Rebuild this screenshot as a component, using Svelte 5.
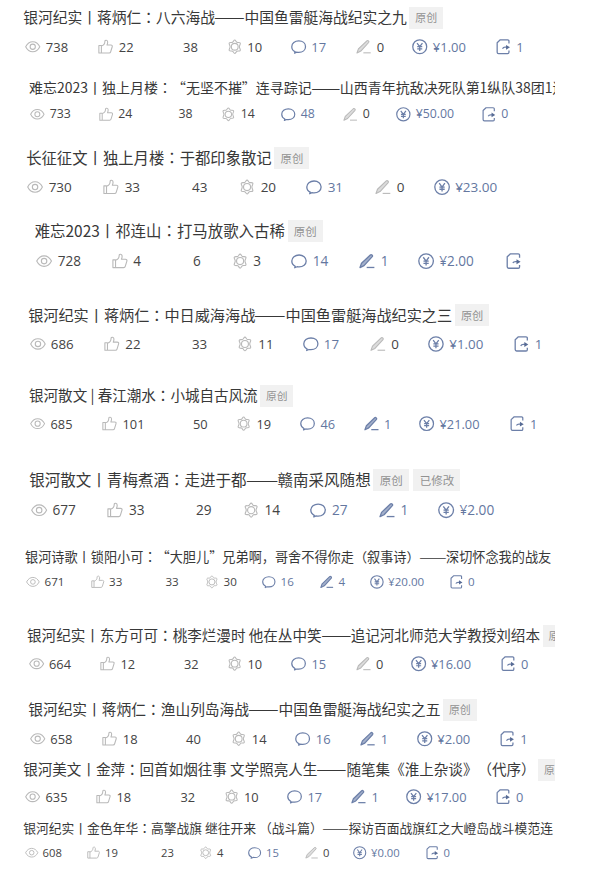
<script>
  // size: title font size, left: title indent, gap: title to stats, after: space below
  // cols: where each stat starts in the row
  const articles = [
    { title: '银河纪实丨蒋炳仁：八六海战——中国鱼雷艇海战纪实之九', tags: ['原创'], size: 14.76, left: 23.2, gap: 8, after: 20,
      cols: [25, 98, 183, 226.5, 290.5, 356, 412, 495.5], stats: ['738', '22', '38', '10', '17', '0', '¥1.00', '1'] },
    { title: '难忘2023丨独上月楼：“无坚不摧”连寻踪记——山西青年抗敌决死队第1纵队38团1连', tags: [], size: 13.99, left: 29, gap: 5, after: 23,
      cols: [30, 98.5, 178.5, 221, 281, 343, 396, 481.5], stats: ['733', '24', '38', '14', '48', '0', '¥50.00', '0'] },
    { title: '长征征文丨独上月楼：于都印象散记', tags: ['原创'], size: 15.35, left: 26.2, gap: 8, after: 23,
      cols: [27, 103, 192, 239, 306, 375, 433.5], stats: ['730', '33', '43', '20', '31', '0', '¥23.00'] },
    { title: '难忘2023丨祁连山：打马放歌入古稀', tags: ['原创'], size: 15.43, left: 34.7, gap: 9, after: 33,
      cols: [36, 111.5, 193, 231.5, 291, 359, 417.5, 505.5], stats: ['728', '4', '6', '3', '14', '1', '¥2.00', ''] },
    { title: '银河纪实丨蒋炳仁：中日威海海战——中国鱼雷艇海战纪实之三', tags: ['原创'], size: 15.15, left: 28.2, gap: 8, after: 31,
      cols: [29.5, 104, 192, 237, 302.5, 370, 428, 513.5], stats: ['686', '22', '33', '11', '17', '0', '¥1.00', '1'] },
    { title: '银河散文 | 春江潮水：小城自古风流', tags: ['原创'], size: 14.55, left: 29, gap: 7, after: 35,
      cols: [30, 102, 193, 236, 300, 363.5, 419, 509.5], stats: ['685', '101', '50', '19', '46', '1', '¥21.00', '1'] },
    { title: '银河散文丨青梅煮酒：走进于都——赣南采风随想', tags: ['原创', '已修改'], size: 15.53, left: 29.3, gap: 9, after: 27,
      cols: [30.5, 107, 196, 242.5, 310, 378.5, 437.5], stats: ['677', '33', '29', '14', '27', '1', '¥2.00'] },
    { title: '银河诗歌丨锁阳小可：“大胆儿”兄弟啊，哥舍不得你走（叙事诗）——深切怀念我的战友', tags: [], size: 13.16, left: 25, gap: 3, after: 33,
      cols: [26, 90.5, 165.5, 205, 262, 320, 369.5, 449.5], stats: ['671', '33', '33', '30', '16', '4', '¥20.00', '0'] },
    { title: '银河纪实丨东方可可：桃李烂漫时 他在丛中笑——追记河北师范大学教授刘绍本', tags: ['原创'], size: 14.57, left: 27, gap: 7, after: 25,
      cols: [28.5, 100, 184, 227, 291, 355.5, 410.5, 500.5], stats: ['664', '12', '32', '10', '15', '0', '¥16.00', '0'] },
    { title: '银河纪实丨蒋炳仁：渔山列岛海战——中国鱼雷艇海战纪实之五', tags: ['原创'], size: 14.73, left: 28.2, gap: 8, after: 10,
      cols: [29.5, 102, 186, 231, 295, 360, 416.5, 499.5], stats: ['658', '18', '40', '14', '16', '1', '¥2.00', '1'] },
    { title: '银河美文丨金萍：回首如烟往事 文学照亮人生——随笔集《淮上杂谈》（代序）', tags: ['原创'], size: 14.56, left: 23.2, gap: 6, after: 11,
      cols: [25, 96, 180.5, 223.5, 287, 351, 406, 495.5], stats: ['635', '18', '32', '10', '17', '1', '¥17.00', '0'] },
    { title: '银河纪实丨金色年华：高擎战旗 继往开来 （战斗篇）——探访百面战旗红之大嶝岛战斗模范连', tags: [], size: 12.79, left: 23.2, gap: 3, after: 0,
      cols: [24.5, 87, 161, 199, 248, 305, 353, 425.5], stats: ['608', '19', '23', '4', '15', '0', '¥0.00', '0'] },
  ];

  const kinds = ['views', 'likes', 'looks', 'favs', 'comments', 'notes', 'money', 'shares'];

  function columns(cols) {
    return cols.map((c, i) => (i < cols.length - 1 ? cols[i + 1] - c + 'px' : 'max-content')).join(' ');
  }

  function isBlue(kind, value) {
    if (kind === 'notes') return value !== '0';
    return kind === 'comments' || kind === 'money' || kind === 'shares';
  }
</script>

<main>
  {#each articles as a}
    <article style="font-size: {a.size}px; margin-bottom: {a.after}px">
      <h2 style="padding-left: {a.left}px">
        <span class="title">
          {#each a.title.split(/(：|——)/) as part}{#if part === '：'}<span class="colon">：</span>{:else if part === '——'}<span class="dash">——</span>{:else}{part}{/if}{/each}
        </span>
        {#each a.tags as tag}
          <span class="tag"><span>{tag}</span></span>
        {/each}
      </h2>
      <div class="stats" style="grid-template-columns: {columns(a.cols)}; padding-left: {a.cols[0]}px; margin-top: {a.gap}px">
        {#each a.stats as value, i}
          {@const kind = kinds[i]}
          <div class="stat" class:blue={isBlue(kind, value)}>
            {#if kind !== 'looks'}
              <svg viewBox="0 0 16 16">
                {#if kind === 'views'}
                  <path d="M.7 8C2.4 4.6 5 2.8 8 2.8S13.6 4.6 15.3 8C13.6 11.4 11 13.2 8 13.2S2.4 11.4.7 8z" />
                  <circle cx="8" cy="8" r="2.7" />
                {:else if kind === 'likes'}
                  <path d="M.9 6.8h2.6v7.6H.9zM3.5 7.2c2.3-.7 3.6-2.3 3.6-4.7 0-1.8 2.9-1.7 2.9.6 0 1.3-.3 2.2-.7 3.1h4c1.2 0 1.7.8 1.4 1.8l-1.6 5.2c-.2.8-.8 1.2-1.6 1.2h-8" />
                {:else if kind === 'favs'}
                  <path d="M8 1.1c1 0 1.3 1.8 2.2 2.3s2.9-.3 3.5.7-.9 2.1-.9 3.9 1.5 2.7.9 3.8-2.4.2-3.4.8-1.3 2.3-2.3 2.3-1.3-1.8-2.2-2.3-2.9.3-3.5-.7.9-2.1.9-3.9-1.5-2.7-.9-3.8 2.4-.2 3.4-.8S7 1.1 8 1.1z" />
                  <circle cx="8" cy="8" r="3.5" />
                {:else if kind === 'comments'}
                  <path d="M4.2 13.1C2.1 12.1.8 10.2.8 7.9.8 4.4 4 2 8 2s7 2.4 7 5.9-3 5.9-7 5.9c-.8 0-1.4-.1-2-.2l-2.3 1z" />
                {:else if kind === 'notes'}
                  <path class="pen" d="M1 14.4l1.5-4.2L11.2 1.9c1-.9 2.8.5 1.9 1.7L5 12.5z" />
                  <path d="M7.6 14.3h7.6" />
                {:else if kind === 'money'}
                  <circle cx="8" cy="8" r="7.2" />
                  <path class="yen" d="M5.2 4.2L8 8l2.8-3.8M8 8v4.3M5.4 8h5.2M5.4 10.2h5.2" />
                {:else}
                  <path d="M13.4 4.6V2.1c0-.8-.5-1.3-1.3-1.3H4.4L1.2 3.8v9.9c0 .8.6 1.4 1.4 1.4h9.5c.8 0 1.3-.5 1.3-1.3v-1.9M6.8 10c.4-1 1.3-1.5 2.6-1.5H12" />
                  <path class="head" d="M10.4 6.1l4 2.5-4 2.5z" />
                {/if}
              </svg>
            {/if}
            <span>{value}</span>
          </div>
        {/each}
      </div>
    </article>
  {/each}
</main>

<style>
  :global(body) {
    background: #fff;
  }

  main {
    width: 555px;
    height: 872px;
    box-sizing: border-box;
    padding-top: 6px;
    overflow: hidden;
  }

  h2 {
    display: flex;
    align-items: center;
    height: 24px;
    margin: 0;
    font-family: "Noto Sans CJK SC", sans-serif;
    font-size: 1em;
    font-weight: 400;
    line-height: 22px;
    color: #383838;
    white-space: nowrap;
    text-spacing-trim: space-all;
  }

  .title {
    flex: none;
    padding-bottom: 2px;
  }

  .colon {
    font-family: "Noto Sans CJK TC", sans-serif;
  }

  /* stretched so the dash fills two full characters */
  .dash {
    display: inline-block;
    width: 2em;
    transform: translateX(-0.06em) scaleX(1.24);
    transform-origin: 0 50%;
  }

  .tag {
    flex: none;
    margin-left: 0.18em;
    padding: 0 0.4em;
    height: 1.46em;
    line-height: 1.46em;
    background: #f1f1f1;
    color: #929292;
  }
  .tag span {
    display: block;
    font-size: 0.74em;
    line-height: 1.97em;
  }
  .tag + .tag {
    margin-left: 0.3em;
  }

  .stats {
    display: grid;
    height: 18px;
    align-items: center;
  }

  .stat {
    display: flex;
    align-items: center;
    gap: 0.36em;
    color: #444;
    font-family: "Open Sans", "Noto Sans", sans-serif;
    white-space: nowrap;
  }
  .stat span {
    font-size: 0.88em;
    line-height: 18px;
  }
  .stat.blue {
    color: #64779f;
  }

  svg {
    flex: none;
    width: 1.05em;
    height: 1.05em;
    overflow: visible;
    fill: none;
    stroke: #b9b9b9;
    stroke-width: 1.1;
    stroke-linejoin: round;
  }
  .blue svg {
    stroke: #6c7fa8;
    stroke-width: 1.3;
  }
  .pen {
    fill: #dcdcdc;
  }
  .blue .pen {
    fill: #a3b0cb;
  }
  .head {
    fill: #576b95;
    stroke: none;
  }
</style>
